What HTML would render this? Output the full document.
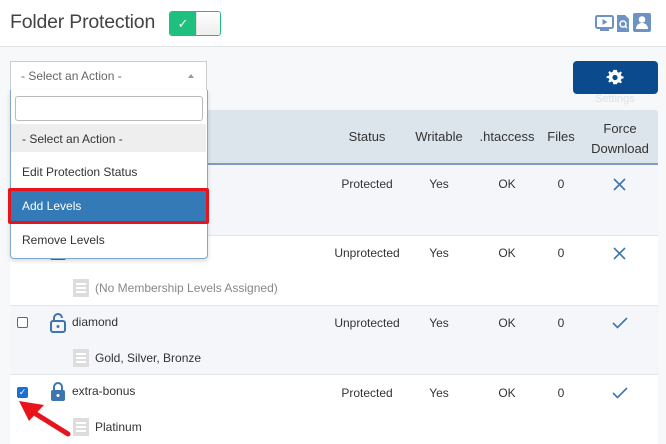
<!DOCTYPE html>
<html><head><style>
*{margin:0;padding:0;box-sizing:border-box}
body{width:666px;height:443px;overflow:hidden;background:#f6f8fa;font-family:"Liberation Sans",sans-serif;position:relative;color:#333}
.a{position:absolute}
.top{left:0;top:0;width:666px;height:47px;background:#fff;border-bottom:1px solid #e0e3e6}
.t{font-size:12px;color:#333;white-space:nowrap}
.c{transform:translateX(-50%)}
.row{left:10px;width:648px;height:70px;border-top:1px solid #e3e6e9}
.doc{width:16px;height:18px;background:#ddd;padding:4px 3px}
.doc i{display:block;height:1.5px;background:#fff;margin-bottom:2.5px}
</style></head><body>
<div class="a top"></div>
<div class="a" style="left:10px;top:11px;font-size:19.5px;color:#444;letter-spacing:-0.2px">Folder Protection</div>
<div class="a" style="left:169px;top:11px;width:52px;height:25px;border:1px solid #1fbf80;border-radius:3px;background:#fff;overflow:hidden">
 <div style="width:26px;height:100%;background:#1fbf80;color:#fff;font-size:13px;text-align:center;line-height:23px">✓</div>
 <div class="a" style="left:26px;top:0;width:25px;height:23px;background:linear-gradient(#fff,#eee);border-left:1px solid #ddd"></div>
</div>
<svg class="a" style="left:595px;top:13px" width="64" height="20" viewBox="0 0 64 20">
 <rect x="1" y="3" width="17" height="12" rx="1.5" fill="none" stroke="#6d93c4" stroke-width="2"/>
 <path d="M7.5 6v6l5-3z" fill="#6d93c4"/><rect x="5" y="16" width="9" height="2" fill="#6d93c4"/>
 <path d="M22 2h8l4 4v13h-12z" fill="#6d93c4"/><circle cx="28" cy="11" r="3" fill="none" stroke="#fff" stroke-width="1.5"/><path d="M30 13l2 2" stroke="#fff" stroke-width="1.5"/>
 <rect x="38" y="0" width="18" height="19" rx="2" fill="#6d93c4"/><circle cx="47" cy="6.5" r="3.3" fill="#fff"/><path d="M41 16c0-4 3-6 6-6s6 2 6 6z" fill="#fff"/>
</svg>
<div class="a" style="left:10px;top:61px;width:197px;height:30px;background:#fff;border:1px solid #ccc;border-bottom:none"></div>
<div class="a t" style="left:21px;top:69px;color:#666">- Select an Action -</div>
<div class="a" style="left:188px;top:74px;border:3px solid transparent;border-bottom:4px solid #999;border-top:none"></div>

<div class="a" style="left:573px;top:61px;width:85px;height:33px;background:#0b4a8c;border-radius:4px"></div>
<svg class="a" style="left:606px;top:69px" width="18" height="18" viewBox="0 0 18 18"><path d="M9 1l2 0 .5 2.3 1.7.8 2-1.3 1.4 1.4-1.3 2 .8 1.7 2.3.5v2l-2.3.5-.8 1.7 1.3 2-1.4 1.4-2-1.3-1.7.8L11 17H7l-.5-2.3-1.7-.8-2 1.3-1.4-1.4 1.3-2-.8-1.7L-.4 10V8l2.3-.5.8-1.7-1.3-2 1.4-1.4 2 1.3 1.7-.8L7 1z" fill="#fff" transform="translate(1,0) scale(.9)"/><circle cx="9" cy="8.5" r="2.6" fill="#0b4a8c"/></svg>
<div class="a t" style="left:595px;top:93px;font-size:11px;color:#dde2e8">Settings</div>

<div class="a" style="left:10px;top:110px;width:648px;height:55px;background:#dce4ec;border-bottom:2px solid #7d9cc2;border-radius:3px 3px 0 0"></div>
<div class="a t c" style="left:367px;top:129px;font-size:13px">Status</div>
<div class="a t c" style="left:439px;top:129px;font-size:13px">Writable</div>
<div class="a t c" style="left:507px;top:129px;font-size:13px">.htaccess</div>
<div class="a t c" style="left:561px;top:129px;font-size:13px">Files</div>
<div class="a t c" style="left:620px;top:119px;font-size:13px;text-align:center;line-height:20px">Force<br>Download</div>

<div class="a row" style="top:165px;background:#f4f6f9;border-top:none"></div>
<div class="a row" style="top:235px;background:#fff"></div>
<div class="a row" style="top:305px;background:#f4f6f9"></div>
<div class="a row" style="top:374px;background:#fff;height:70px"></div>

<div class="a t c" style="left:367px;top:177px">Protected</div><div class="a t c" style="left:439px;top:177px">Yes</div><div class="a t c" style="left:507px;top:177px">OK</div><div class="a t c" style="left:561px;top:177px">0</div>
<svg class="a" style="left:613px;top:178px" width="13" height="13"><path d="M1 1l11 11M12 1L1 12" stroke="#3d75b0" stroke-width="1.6"/></svg>
<div class="a t c" style="left:367px;top:246px">Unprotected</div><div class="a t c" style="left:439px;top:246px">Yes</div><div class="a t c" style="left:507px;top:246px">OK</div><div class="a t c" style="left:561px;top:246px">0</div>
<svg class="a" style="left:613px;top:247px" width="13" height="13"><path d="M1 1l11 11M12 1L1 12" stroke="#3d75b0" stroke-width="1.6"/></svg>
<div class="a t c" style="left:367px;top:316px">Unprotected</div><div class="a t c" style="left:439px;top:316px">Yes</div><div class="a t c" style="left:507px;top:316px">OK</div><div class="a t c" style="left:561px;top:316px">0</div>
<svg class="a" style="left:612px;top:317px" width="16" height="12"><path d="M1 6l4.5 4.5L15 1" fill="none" stroke="#3d75b0" stroke-width="1.6"/></svg>
<div class="a t c" style="left:367px;top:386px">Protected</div><div class="a t c" style="left:439px;top:386px">Yes</div><div class="a t c" style="left:507px;top:386px">OK</div><div class="a t c" style="left:561px;top:386px">0</div>
<svg class="a" style="left:612px;top:387px" width="16" height="12"><path d="M1 6l4.5 4.5L15 1" fill="none" stroke="#3d75b0" stroke-width="1.6"/></svg>

<div class="a" style="left:50px;top:248px;width:16px;height:12px;background:#3d75b0;border-radius:2px"></div>
<div class="a doc" style="left:73px;top:279px"><i></i><i></i><i></i></div>
<div class="a t" style="left:95px;top:281px;color:#888">(No Membership Levels Assigned)</div>
<div class="a" style="left:17px;top:317px;width:11px;height:11px;border:1px solid #666;border-radius:2px;background:#fff"></div>
<svg class="a" style="left:50px;top:313px" width="16" height="20"><path d="M4 8V5a4 4 0 0 1 8 0" fill="none" stroke="#3d75b0" stroke-width="2"/><rect x="1" y="8" width="14" height="11" rx="2" fill="none" stroke="#3d75b0" stroke-width="2"/><circle cx="8" cy="13.5" r="1.5" fill="#3d75b0"/></svg>
<div class="a t" style="left:72px;top:315px">diamond</div>
<div class="a doc" style="left:73px;top:349px"><i></i><i></i><i></i></div>
<div class="a t" style="left:95px;top:351px">Gold, Silver, Bronze</div>
<div class="a" style="left:17px;top:387px;width:11px;height:11px;border-radius:2px;background:#1a6fd6;color:#fff;font-size:9px;line-height:11px;text-align:center">✓</div>
<svg class="a" style="left:50px;top:382px" width="16" height="20"><path d="M4 9V5a4 4 0 0 1 8 0v4" fill="none" stroke="#3d75b0" stroke-width="2"/><rect x="1" y="8" width="14" height="11" rx="2" fill="#3d75b0"/><circle cx="8" cy="13.5" r="1.5" fill="#fff"/></svg>
<div class="a t" style="left:72px;top:384px">extra-bonus</div>
<div class="a doc" style="left:73px;top:418px"><i></i><i></i><i></i></div>
<div class="a t" style="left:95px;top:420px">Platinum</div>
<svg class="a" style="left:14px;top:398px" width="60" height="42"><path d="M54 36L22 16" stroke="#e8141b" stroke-width="5" stroke-linecap="round"/><path d="M5 3l25 4-15 16z" fill="#e8141b"/></svg>

<div class="a" style="left:10px;top:90px;width:198px;height:169px;background:#fff;border:1px solid #80a8d0;border-top:none;border-radius:0 0 4px 4px;box-shadow:0 2px 4px rgba(0,0,0,.15)"></div>
<div class="a" style="left:15px;top:96px;width:188px;height:25px;border:1px solid #bbb;border-radius:3px;background:#fff"></div>
<div class="a" style="left:11px;top:124px;width:195px;height:28px;background:#eee"></div>
<div class="a t" style="left:22px;top:132px">- Select an Action -</div>
<div class="a t" style="left:22px;top:165px">Edit Protection Status</div>
<div class="a" style="left:8px;top:188px;width:201px;height:36px;border:3px solid #e8141b;background:#337ab7;border-radius:2px"></div>
<div class="a t" style="left:22px;top:199px;color:#fff">Add Levels</div>
<div class="a t" style="left:22px;top:233px">Remove Levels</div>
</body></html>
